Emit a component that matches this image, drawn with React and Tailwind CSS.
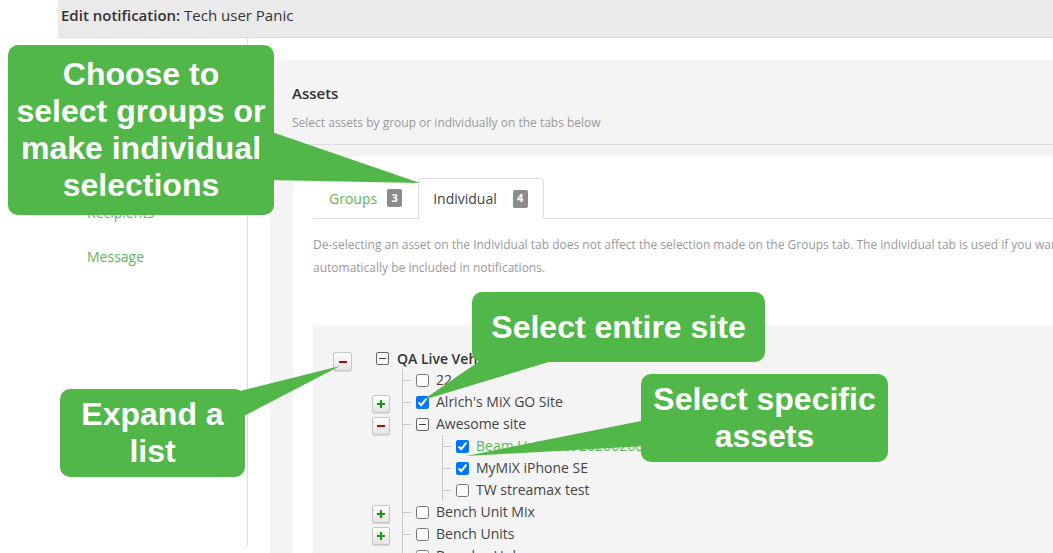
import React from "react";

function Btn({ kind, big }) {
  return (
    <div
      className={
        (big ? "w-[19px] h-[19px] " : "w-[18px] h-[18px] ") +
        "flex items-center justify-center border border-[#c6c6c6] rounded-[2px] bg-linear-to-b from-white to-[#e4e4e4] shadow-[0_1px_1px_rgba(0,0,0,0.12)]"
      }
    >
      {kind === "minus" ? (
        <svg width="8" height="8" viewBox="0 0 8 8">
          <rect x="0" y="3" width="8" height="2" fill="#c00000" />
        </svg>
      ) : (
        <svg width="8" height="8" viewBox="0 0 8 8">
          <rect x="0" y="3" width="8" height="2" fill="#119911" />
          <rect x="3" y="0" width="2" height="8" fill="#119911" />
        </svg>
      )}
    </div>
  );
}

function BoxMinus() {
  return (
    <div className="w-[13px] h-[13px] shrink-0 border border-[#666666] rounded-[2px] flex items-center justify-center bg-white">
      <div className="w-[7px] h-px bg-[#444444]" />
    </div>
  );
}

function Row({ checked, label, green, expander }) {
  return (
    <div className="flex items-center h-[22px]">
      <div className="w-[8px] h-px bg-[#c8c8c8]" />
      <div className="ml-[5px] flex items-center">
        {expander ? (
          <BoxMinus />
        ) : (
          <input type="checkbox" checked={!!checked} readOnly className="w-[13px] h-[13px]" />
        )}
      </div>
      <span
        className={
          "ml-[7px] whitespace-nowrap text-[14px] leading-[22px] " +
          (green ? "text-[#5cb85c]" : "text-[#444444]")
        }
      >
        {label}
      </span>
    </div>
  );
}

export default function App() {
  const btnRows = [null, "plus", "minus", null, null, null, "plus", "plus", null];
  return (
    <div className="relative w-[1053px] h-[553px] overflow-hidden bg-white font-['Open_Sans',sans-serif]">
      {/* header */}
      <div className="flex h-[38px]">
        <div className="w-[58px]" />
        <div className="flex-1 bg-[#eaeaea] border-b border-[#d8d8d8] pl-[3px] pt-[5px] text-[15px] leading-[21px] text-[#333333]">
          <span className="font-semibold">Edit notification:</span> Tech user Panic
        </div>
      </div>

      <div className="flex h-[515px]">
        {/* sidebar */}
        <div className="w-[248px] h-[509px] shrink-0 border-r border-[#dddddd] pl-[87px] pt-[164px] text-[14px] text-[#5cb85c]">
          <div className="h-[44px] leading-[22px]">Recipients</div>
          <div className="h-[44px] leading-[22px]">Message</div>
        </div>

        {/* main panel */}
        <div className="flex-1 ml-[22px] mt-[22px] bg-[#f4f4f4] flex flex-col">
          <div className="pl-[22px] pt-[23px] pb-[12px] border-b border-[#dddddd]">
            <div className="text-[15px] leading-[20px] font-semibold text-[#333333]">Assets</div>
            <div className="mt-[11px] text-[12px] leading-[18px] text-[#999999]">
              Select assets by group or individually on the tabs below
            </div>
          </div>
          <div className="pt-[12px] flex-1 flex">
            <div className="ml-[23px] flex-1 bg-white pt-[21px] pl-[20px]">
              {/* tabs */}
              <div className="flex border-b border-[#dddddd]">
                <div className="flex items-center h-[40px] pl-[16px] pr-[16px] text-[14px] text-[#5cb85c]">
                  Groups
                  <span className="ml-[10px] inline-flex items-center justify-center w-[15px] h-[18px] rounded-[2px] bg-[#8c8c8c] text-white text-[11px] font-bold">
                    3
                  </span>
                </div>
                <div className="flex items-center h-[41px] -mb-px pl-[14px] pr-[15px] border border-[#dddddd] border-b-white bg-white rounded-t-[4px] text-[14px] text-[#444444]">
                  Individual
                  <span className="ml-[16px] inline-flex items-center justify-center w-[15px] h-[18px] rounded-[2px] bg-[#8c8c8c] text-white text-[11px] font-bold">
                    4
                  </span>
                </div>
              </div>

              <div className="mt-[14px] text-[12px] leading-[23px] text-[#999999] whitespace-nowrap">
                De-selecting an asset on the Individual tab does not affect the selection made on the Groups tab. The individual tab is used if you want to select assets that are not in a group, or to make sure that they will
                <br />
                automatically be included in notifications.
              </div>

              {/* tree */}
              <div className="mt-[46px] bg-[#f4f4f4] pt-[22px] pl-[20px] h-[300px]">
                <div className="flex">
                  <div className="w-[39px] shrink-0 pt-[5px]">
                    <Btn kind="minus" big />
                  </div>
                  <div className="flex flex-col">
                    <div className="flex items-center h-[22px]">
                      <div className="w-[4px]" />
                      <BoxMinus />
                      <span className="ml-[8px] text-[14px] font-semibold text-[#333333] whitespace-nowrap">
                        QA Live Vehicles
                      </span>
                    </div>
                    <div className="flex">
                      <div className="w-[18px] flex flex-col">
                        {btnRows.map((b, i) => (
                          <div key={i} className="h-[22px] flex items-center pt-[3px]">
                            {b ? <Btn kind={b} /> : null}
                          </div>
                        ))}
                      </div>
                      <div className="ml-[12px] border-l border-[#c8c8c8]">
                        <Row label="22 4G" />
                        <Row checked label="Alrich's MiX GO Site" />
                        <Row expander label="Awesome site" />
                        <div className="ml-[39px] border-l border-[#c8c8c8]">
                          <Row checked green label="Beam Unit Test 20260260" />
                          <Row checked label="MyMiX iPhone SE" />
                          <Row label="TW streamax test" />
                        </div>
                        <Row label="Bench Unit Mix" />
                        <Row label="Bench Units" />
                        <Row label="Bramley Hub" />
                      </div>
                    </div>
                  </div>
                </div>
              </div>
            </div>
          </div>
        </div>
      </div>

      {/* callout tails */}
      <svg
        className="absolute left-0 top-0 w-[1053px] h-[553px] pointer-events-none"
        viewBox="0 0 1053 553"
      >
        <polygon points="266,130 420,183 266,180" fill="#50b748" />
        <polygon points="484,358 423,400 562,358" fill="#50b748" />
        <polygon points="236,392 340,366 244,416" fill="#50b748" />
        <polygon points="646,420 466,456 646,446" fill="#50b748" />
      </svg>

      {/* callout boxes */}
      <div className="absolute left-[8px] top-[45px] w-[266px] h-[170px] rounded-[10px] bg-[#50b748] flex items-center justify-center text-center text-white font-bold text-[32px] leading-[37px] font-['Liberation_Sans',Arial,sans-serif]">
        <div>
          Choose to
          <br />
          select groups or
          <br />
          make individual
          <br />
          selections
        </div>
      </div>
      <div className="absolute left-[472px] top-[292px] w-[293px] h-[70px] rounded-[10px] bg-[#50b748] flex items-center justify-center text-center text-white font-bold text-[32px] leading-[37px] font-['Liberation_Sans',Arial,sans-serif]">
        Select entire site
      </div>
      <div className="absolute left-[60px] top-[389px] w-[185px] h-[88px] rounded-[10px] bg-[#50b748] flex items-center justify-center text-center text-white font-bold text-[32px] leading-[37px] font-['Liberation_Sans',Arial,sans-serif]">
        <div>
          Expand a
          <br />
          list
        </div>
      </div>
      <div className="absolute left-[641px] top-[374px] w-[247px] h-[88px] rounded-[10px] bg-[#50b748] flex items-center justify-center text-center text-white font-bold text-[32px] leading-[37px] font-['Liberation_Sans',Arial,sans-serif]">
        <div>
          Select specific
          <br />
          assets
        </div>
      </div>
    </div>
  );
}
